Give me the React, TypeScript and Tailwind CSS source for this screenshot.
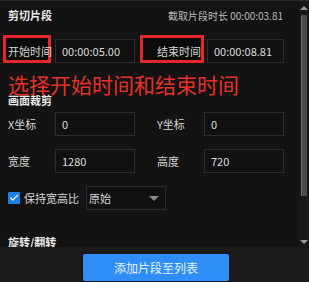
import { Check } from "lucide-react";

const font = { fontFamily: '"Noto Sans CJK SC", "Noto Sans", sans-serif' };

function Field({ value, w = "w-[80px]" }: { value: string; w?: string }) {
  return (
    <div className={`${w} h-[24px] flex items-center pl-[6px] bg-[#111111] border border-[#2c2c2c] text-[11px] text-[#dcdcdc]`}>
      {value}
    </div>
  );
}

function Marked({ label, className, box }: { label: string; className: string; box: string }) {
  // red annotation box round the label
  return (
    <div className={`relative h-[24px] flex items-center text-[11px] text-[#d6d6d6] ${className}`}>
      <div className={`absolute border-[3px] border-[#e5262a] bg-[#0b0b0b] ${box}`} />
      <span className="relative">{label}</span>
    </div>
  );
}

export default function App() {
  return (
    <div style={font} className="w-[309px] h-[282px] flex flex-col bg-[#131313] overflow-hidden">
      <div className="flex flex-1 min-h-0 border-t border-[#2a2a2a]">
        {/* Scroll content */}
        <div className="relative flex-1 pl-2 overflow-hidden">
          <div className="h-[29px] flex items-center justify-between pr-[16px]">
            <span className="text-[11px] font-bold text-[#e8e8e8]">剪切片段</span>
            <span className="text-[10px] text-[#bdbdbd]">截取片段时长 00:00:03.81</span>
          </div>

          <div className="mt-[9px] flex items-center">
            <Marked label="开始时间" className="w-[47px]" box="-left-[5px] -top-[4px] w-[48px] h-[28px]" />
            <Field value="00:00:05.00" />
            <Marked label="结束时间" className="w-[72px] pl-[22px]" box="left-[5px] -top-[4px] w-[64px] h-[28px]" />
            <Field value="00:00:08.81" w="w-[77px]" />
          </div>

          <div className="mt-[29px] h-[16px] leading-[16px] text-[11px] font-bold text-[#e8e8e8]">画面裁剪</div>

          <div className="mt-[4px] flex items-center text-[11px] text-[#d6d6d6]">
            <span className="w-[47px]">X坐标</span>
            <Field value="0" />
            <span className="w-[69px] pl-[22px]">Y坐标</span>
            <Field value="0" />
          </div>

          <div className="mt-[13px] flex items-center text-[11px] text-[#d6d6d6]">
            <span className="w-[47px]">宽度</span>
            <Field value="1280" />
            <span className="w-[69px] pl-[22px]">高度</span>
            <Field value="720" />
          </div>

          <div className="mt-[13px] flex items-center text-[11px] text-[#d6d6d6]">
            <div className="w-[12px] h-[12px] bg-[#1e80e6] flex items-center justify-center rounded-[1px]">
              <Check className="w-[10px] h-[10px] text-white" strokeWidth={3} />
            </div>
            <span className="ml-[4px] w-[62px]">保持宽高比</span>
            <div className="w-[80px] h-[24px] flex items-center justify-between pl-[2px] pr-[6px] bg-[#111111] border border-[#2c2c2c]">
              <span>原始</span>
              <span className="w-0 h-0 border-l-[5px] border-r-[5px] border-t-[5px] border-l-transparent border-r-transparent border-t-[#8a8a8a]" />
            </div>
          </div>

          <div className="mt-[24px] h-[16px] leading-[16px] text-[11px] font-bold text-[#e8e8e8]">旋转/翻转</div>

          {/* annotation text */}
          <div className="absolute left-[8px] top-[71px] text-[21px] leading-[24px] text-[#e8302c]">
            选择开始时间和结束时间
          </div>
        </div>

        {/* Scrollbar */}
        <div className="w-[10px] bg-[#181818] flex flex-col items-center">
          <span className="mt-[5px] w-0 h-0 border-l-[4px] border-r-[4px] border-b-[4px] border-l-transparent border-r-transparent border-b-[#9a9a9a]" />
          <div className="mt-[5px] w-[6px] h-[181px] bg-[#4a4a4a] border-l border-[#6a6a6a] rounded-[1px]" />
          <span className="mt-[44px] w-0 h-0 border-l-[4px] border-r-[4px] border-t-[4px] border-l-transparent border-r-transparent border-t-[#9a9a9a]" />
        </div>
      </div>

      {/* Footer */}
      <div className="h-[35px] shrink-0 bg-[#1a1a1a] flex justify-center pl-[3px] pt-[7px]">
        <button className="w-[146px] h-[27px] bg-[#2e8ef6] rounded-[2px] text-[12px] text-[#e8f1ff]">
          添加片段至列表
        </button>
      </div>
    </div>
  );
}
